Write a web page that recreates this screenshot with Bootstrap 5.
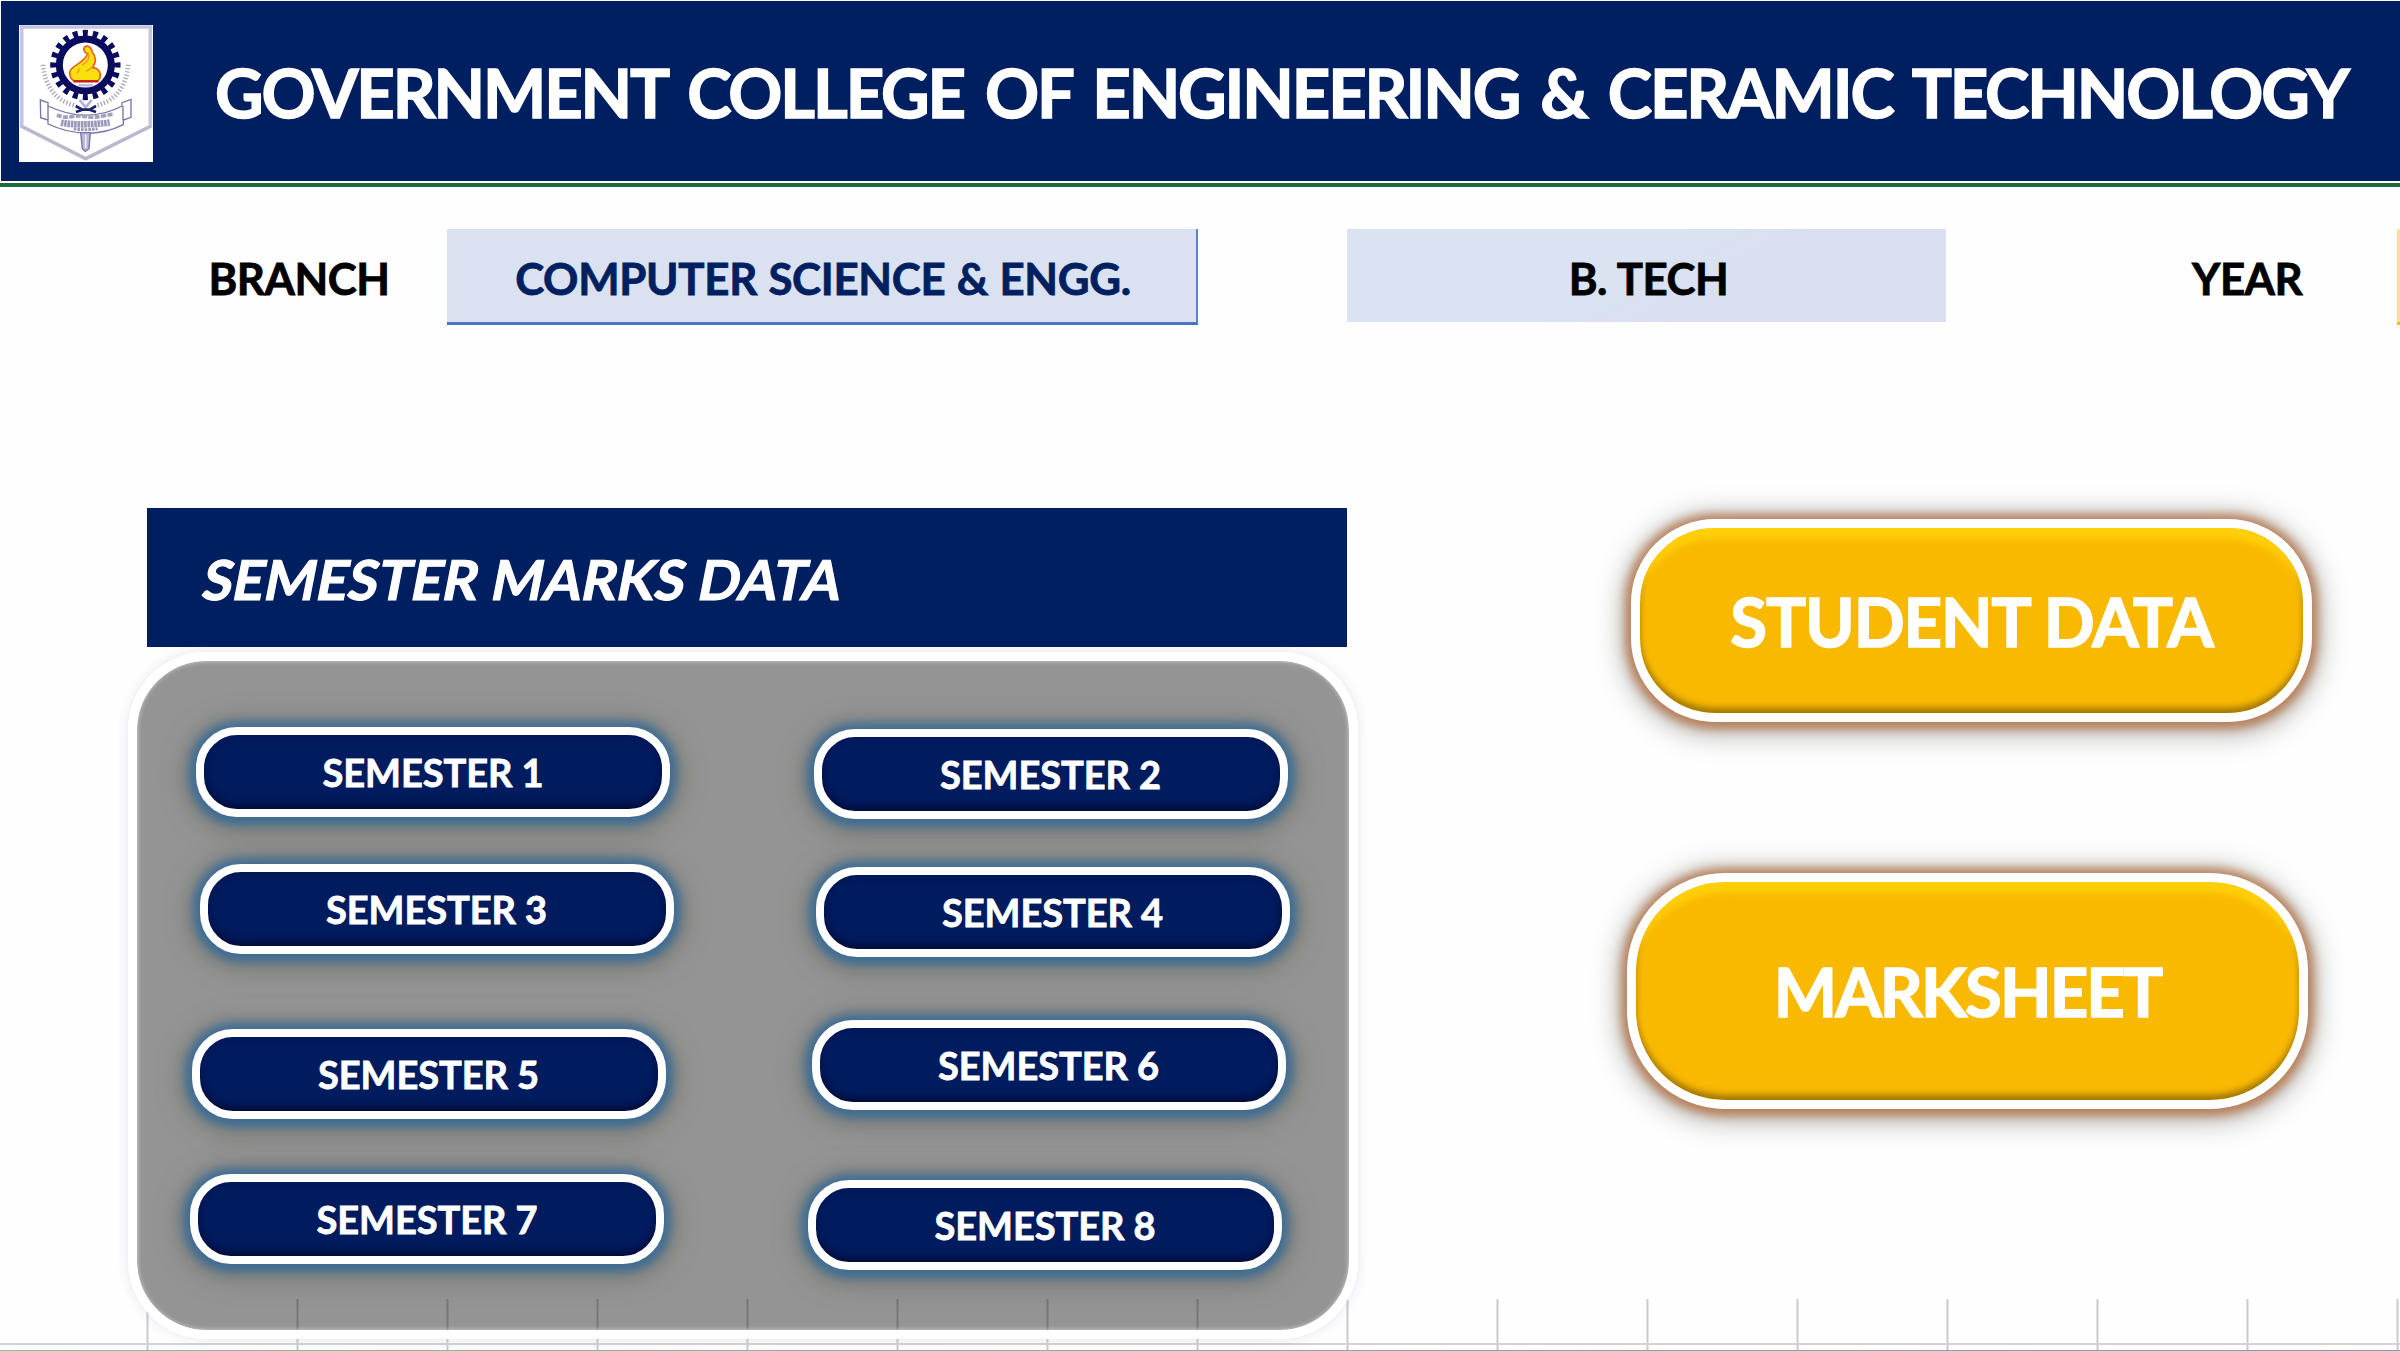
<!DOCTYPE html>
<html lang="en">
<head>
<meta charset="utf-8">
<meta name="viewport" content="width=device-width, initial-scale=1">
<title>Government College of Engineering &amp; Ceramic Technology</title>
<link href="https://cdn.jsdelivr.net/npm/bootstrap@5.3.0/dist/css/bootstrap.min.css" rel="stylesheet">
<style>
  :root { --navy: #001f60; --gold: #f9b900; }
  body { font-family: Lato, "Open Sans", sans-serif; font-weight: 700; background: #fefefe; height: 1351px; overflow: hidden; color: #000; }
  .masthead { height: 187px; padding: 1px 0 0 1px; background: #fff; border-bottom: 4px solid #1c6b3c; }
  .masthead-bar { height: 179.5px; background: var(--navy); padding-left: 18px; }
  .crest { width: 134px; height: 137px; margin-top: 24px; }
  .college { font-size: 67px; line-height: 80px; margin: 51px 0 0 62px; letter-spacing: -2.15px; word-spacing: 7px; -webkit-text-stroke: 1.4px #fff; }
  .info-row { height: 96px; margin-top: 42px; font-size: 43.8px; line-height: 98px; letter-spacing: -.5px; word-spacing: 1px; -webkit-text-stroke: .8px currentColor; }
  .info-label { width: 447px; padding-left: 208.5px; }
  .branch-box { width: 751px; height: 96px; padding-left: 3px; letter-spacing: -.3px; background: #dae2f1; border-right: 2px solid #5b82cb; border-bottom: 3px solid #4a74c2; color: var(--navy); }
  .degree-box { width: 599px; height: 93px; margin-left: 149px; padding-left: 4px; background: linear-gradient(150deg, #d9e3f1 45%, #dadff2 65%); }
  .year-label { width: 451px; padding-left: 246px; }
  .year-box { width: 3px; height: 96px; background: #ffe08a; border-bottom: 3px solid #ffc000; }
  .main-row { margin-top: 183px; }
  .marks-col { width: 1222px; margin-left: 128px; }
  .marks-title { width: 1200px; height: 139px; margin-left: 19px; padding-left: 57px; background: var(--navy); font-size: 55px; line-height: 142px; -webkit-text-stroke: 1.1px #fff; }
  .slanted { display: inline-block; transform: skewX(-11deg); }
  .marks-panel { width: 1230px; height: 687px; margin-top: 5px; border: 9px solid #fff; border-radius: 78px; background: rgba(3,0,3,.415) padding-box; box-shadow: 0 0 12px rgba(90,60,110,.14); }
  .panel-fill { border-radius: 68px; height: 100%; box-shadow: inset 0 0 4px 1px rgba(255,255,255,.45); }
  .pill { display: block; width: 474px; height: 90px; padding: 0; border: 8.5px solid #fff; border-radius: 41px; background: #001b5e; color: #fff; font-size: 38px; font-weight: 700; line-height: 75.5px; letter-spacing: -.05px; -webkit-text-stroke: .8px #fff;
    box-shadow: 0 1px 10px 7px rgba(48,104,155,.8), 0 4px 26px 11px rgba(85,95,75,.45), inset 0 -7px 7px -3px #000d38, inset 0 0 6px #001652; }
  .gold-btn { display: block; width: 681px; padding: 0; border: 9px solid #fff; background: var(--gold); color: #fff; font-size: 67px; font-weight: 700; -webkit-text-stroke: 1.5px #fff;
    box-shadow: 0 1px 10px 6px rgba(180,112,68,.8), 0 4px 26px 10px rgba(80,80,70,.38), inset 0 -8px 7px -3px #a17700, inset 0 16px 6px -5px #ffcf08, inset 0 0 7px #c48f00; }
  .gold-student { height: 203px; border-radius: 84px; margin: 11px 0 0 281px; line-height: 182px; letter-spacing: -1.1px; }
  .gold-marks { height: 236px; border-radius: 98px; margin: 151px 0 0 277px; line-height: 216px; letter-spacing: -1.9px; }
  .sheet-grid { left: 0; top: 1299px; width: 2400px; height: 52px; z-index: -1; }
</style>
</head>
<body class="position-relative">
<header class="masthead">
  <div class="masthead-bar d-flex align-items-start">
    <svg class="crest flex-shrink-0" viewBox="58 75 402 411" preserveAspectRatio="none" aria-label="College crest">
      <rect x="58" y="75" width="402" height="411" fill="#fff"/>
      <path d="M66 81H452V379L258 476L66 379Z" fill="none" stroke="#c6c5df" stroke-width="11"/>
      <path d="M66 379L258 476L452 379" fill="none" stroke="#b9b8c6" stroke-width="8"/>
      <circle cx="257" cy="195" r="96" fill="none" stroke="#080b5e" stroke-width="19" pathLength="40" stroke-dasharray="1 1" stroke-dashoffset=".5"/>
      <circle cx="257" cy="195" r="78" fill="#fff" stroke="#080b5e" stroke-width="21"/>
      <path d="M130 194C136 262 170 302 224 316M386 194C380 262 346 302 292 316" fill="none" stroke="#aaa9bb" stroke-width="14" stroke-dasharray="4 6"/>
      <path d="M258 139C269 136 275 145 278 156C289 170 290 186 279 202C296 204 305 218 301 233Q297 244 287 243H226Q211 239 210 219C211 204 223 201 233 193C247 184 261 174 263 161C252 157 249 144 258 139Z" fill="#fae00d" stroke="#e9601d" stroke-width="5"/>
      <path d="M264 157C274 178 259 188 247 196M278 202L260 214M240 206L232 220" fill="none" stroke="#ef962b" stroke-width="4"/>
      <path d="M221 244H296" stroke="#c31a18" stroke-width="7"/>
      <path d="M236 256H280" stroke="#b8b9d5" stroke-width="7"/>
      <path d="M240 300L258 322L276 300" fill="none" stroke="#b3b3cf" stroke-width="8"/>
      <path d="M122 300L145 308V318Q202 345 258 346Q320 344 367 318V308L394 298V352L371 360V374Q317 401 258 400Q196 396 145 372V360L123 353Z" fill="#fff" stroke="#7774aa" stroke-width="4"/>
      <path d="M145 318V360M370 318V360" stroke="#7774aa" stroke-width="4"/>
      <path d="M228 318L248 329H270L289 318M229 336L248 329M270 329L289 336" fill="none" stroke="#1d2069" stroke-width="8"/>
      <path d="M172 345Q190 354 215 350T262 350T310 348T342 343" fill="none" stroke="#a3a2bc" stroke-width="11" stroke-dasharray="15 4"/>
      <path d="M184 368Q240 378 330 368" fill="none" stroke="#9b9aba" stroke-width="20" stroke-dasharray="8 2"/>
      <path d="M222 386Q258 392 294 386" fill="none" stroke="#9b9aba" stroke-width="9" stroke-dasharray="8 3"/>
      <path d="M243 398H272L268 446L257 454L248 446Z" fill="#b9b8d2" stroke="#7774aa" stroke-width="4"/>
      <path d="M258 404V444" stroke="#eeeef8" stroke-width="5"/>
    </svg>
    <h1 class="college text-white text-nowrap fw-bold">GOVERNMENT COLLEGE OF ENGINEERING &amp; CERAMIC TECHNOLOGY</h1>
  </div>
</header>

<section class="info-row d-flex text-nowrap">
  <div class="info-label flex-shrink-0">BRANCH</div>
  <div class="branch-box flex-shrink-0 text-center">COMPUTER SCIENCE &amp; ENGG.</div>
  <div class="degree-box flex-shrink-0 text-center">B. TECH</div>
  <div class="year-label flex-shrink-0">YEAR</div>
  <div class="year-box flex-shrink-0"></div>
</section>

<main class="main-row d-flex">
  <section class="marks-col flex-shrink-0">
    <h2 class="marks-title text-white text-nowrap fw-bold mb-0"><span class="slanted">SEMESTER MARKS DATA</span></h2>
    <div class="marks-panel">
      <div class="panel-fill d-flex">
        <div class="d-flex flex-column" style="padding-left:59px">
          <button class="pill" style="margin:66px 0 0 0">SEMESTER 1</button>
          <button class="pill" style="margin:47px 0 0 3.5px">SEMESTER 3</button>
          <button class="pill" style="margin:75px 0 0 -4.5px">SEMESTER 5</button>
          <button class="pill" style="margin:55px 0 0 -6px">SEMESTER 7</button>
        </div>
        <div class="d-flex flex-column" style="padding-left:140px">
          <button class="pill" style="margin:68px 0 0 0">SEMESTER 2</button>
          <button class="pill" style="margin:47.5px 0 0 2px">SEMESTER 4</button>
          <button class="pill" style="margin:63px 0 0 -2px">SEMESTER 6</button>
          <button class="pill" style="margin:70px 0 0 -5.5px">SEMESTER 8</button>
        </div>
      </div>
    </div>
  </section>
  <section class="flex-shrink-0">
    <button class="gold-btn gold-student">STUDENT DATA</button>
    <button class="gold-btn gold-marks">MARKSHEET</button>
  </section>
</main>

<svg class="sheet-grid position-absolute" viewBox="0 0 2400 52" aria-hidden="true">
  <defs>
    <pattern id="cols" x="146.5" width="150" height="52" patternUnits="userSpaceOnUse"><rect width="2" height="52" fill="#cbc9cb"/></pattern>
    <linearGradient id="edge"><stop offset="0" stop-color="#7fc793"/><stop offset=".55" stop-color="#76b3a6"/><stop offset="1" stop-color="#6fa3c4"/></linearGradient>
  </defs>
  <rect x="146" width="2254" height="52" fill="url(#cols)"/>
  <rect y="44" width="2400" height="2" fill="#d5d1d5"/>
  <rect y="51" width="2400" height="1" fill="url(#edge)"/>
</svg>
<script src="https://cdn.jsdelivr.net/npm/bootstrap@5.3.0/dist/js/bootstrap.bundle.min.js"></script>
</body>
</html>
